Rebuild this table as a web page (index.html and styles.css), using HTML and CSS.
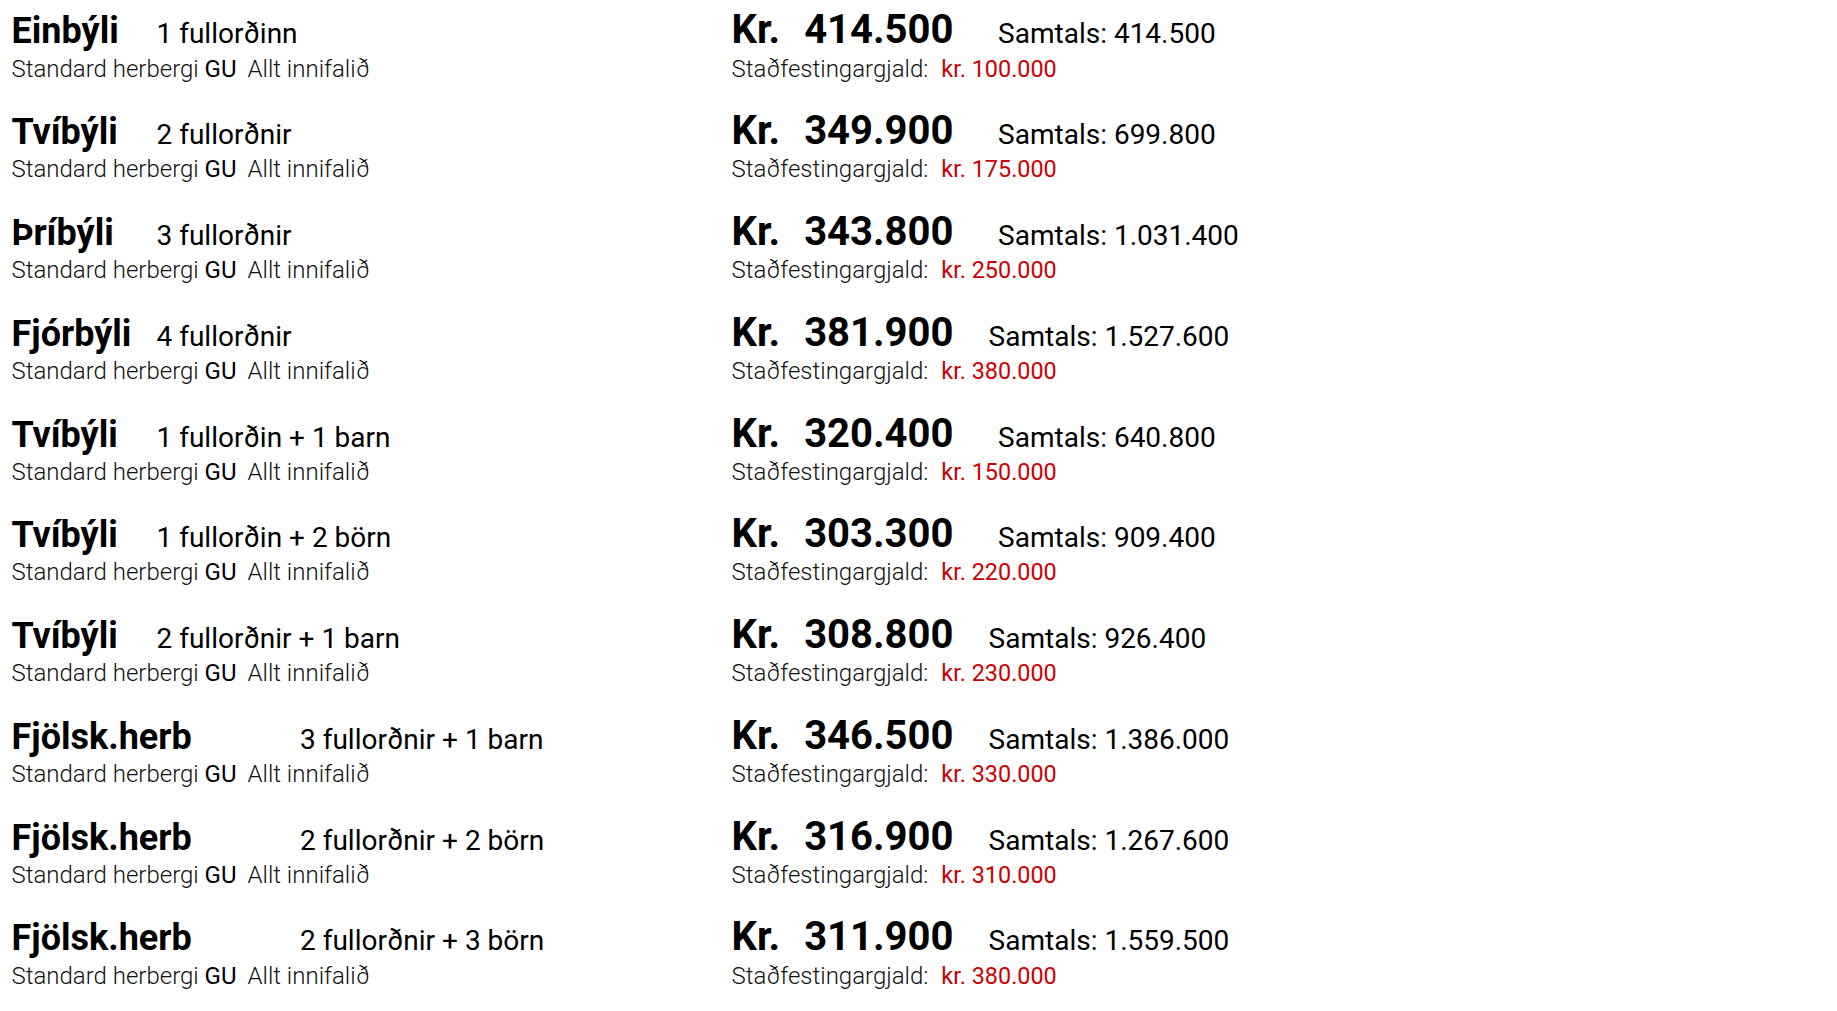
FILE: index.html
```html
<!DOCTYPE html>
<html lang="is">
<head>
<meta charset="utf-8">
<title>Verðskrá</title>
<link rel="stylesheet" href="styles.css">
</head>
<body>
<div class="list">
  <div class="row">
    <div class="cell left"><span class="title">Einbýli</span><span class="pax">1 fullorðinn</span></div>
    <div class="cell right"><span class="cur">Kr.</span><span class="amt">414.500</span><span class="total">Samtals: 414.500</span></div>
    <div class="cell sub">Standard herbergi <span class="gu">GU</span><span class="incl">Allt innifalið</span></div>
    <div class="cell sub2">Staðfestingargjald:<span class="fee">kr. 100.000</span></div>
  </div>
  <div class="row">
    <div class="cell left"><span class="title">Tvíbýli</span><span class="pax">2 fullorðnir</span></div>
    <div class="cell right"><span class="cur">Kr.</span><span class="amt">349.900</span><span class="total">Samtals: 699.800</span></div>
    <div class="cell sub">Standard herbergi <span class="gu">GU</span><span class="incl">Allt innifalið</span></div>
    <div class="cell sub2">Staðfestingargjald:<span class="fee">kr. 175.000</span></div>
  </div>
  <div class="row">
    <div class="cell left"><span class="title">Þríbýli</span><span class="pax">3 fullorðnir</span></div>
    <div class="cell right"><span class="cur">Kr.</span><span class="amt">343.800</span><span class="total">Samtals: 1.031.400</span></div>
    <div class="cell sub">Standard herbergi <span class="gu">GU</span><span class="incl">Allt innifalið</span></div>
    <div class="cell sub2">Staðfestingargjald:<span class="fee">kr. 250.000</span></div>
  </div>
  <div class="row">
    <div class="cell left"><span class="title">Fjórbýli</span><span class="pax">4 fullorðnir</span></div>
    <div class="cell right"><span class="cur">Kr.</span><span class="amt">381.900</span><span class="total tight">Samtals: 1.527.600</span></div>
    <div class="cell sub">Standard herbergi <span class="gu">GU</span><span class="incl">Allt innifalið</span></div>
    <div class="cell sub2">Staðfestingargjald:<span class="fee">kr. 380.000</span></div>
  </div>
  <div class="row">
    <div class="cell left"><span class="title">Tvíbýli</span><span class="pax">1 fullorðin + 1 barn</span></div>
    <div class="cell right"><span class="cur">Kr.</span><span class="amt">320.400</span><span class="total">Samtals: 640.800</span></div>
    <div class="cell sub">Standard herbergi <span class="gu">GU</span><span class="incl">Allt innifalið</span></div>
    <div class="cell sub2">Staðfestingargjald:<span class="fee">kr. 150.000</span></div>
  </div>
  <div class="row">
    <div class="cell left"><span class="title">Tvíbýli</span><span class="pax">1 fullorðin + 2 börn</span></div>
    <div class="cell right"><span class="cur">Kr.</span><span class="amt">303.300</span><span class="total">Samtals: 909.400</span></div>
    <div class="cell sub">Standard herbergi <span class="gu">GU</span><span class="incl">Allt innifalið</span></div>
    <div class="cell sub2">Staðfestingargjald:<span class="fee">kr. 220.000</span></div>
  </div>
  <div class="row">
    <div class="cell left"><span class="title">Tvíbýli</span><span class="pax">2 fullorðnir + 1 barn</span></div>
    <div class="cell right"><span class="cur">Kr.</span><span class="amt">308.800</span><span class="total tight">Samtals: 926.400</span></div>
    <div class="cell sub">Standard herbergi <span class="gu">GU</span><span class="incl">Allt innifalið</span></div>
    <div class="cell sub2">Staðfestingargjald:<span class="fee">kr. 230.000</span></div>
  </div>
  <div class="row">
    <div class="cell left"><span class="title wide">Fjölsk.herb</span><span class="pax">3 fullorðnir + 1 barn</span></div>
    <div class="cell right"><span class="cur">Kr.</span><span class="amt">346.500</span><span class="total tight">Samtals: 1.386.000</span></div>
    <div class="cell sub">Standard herbergi <span class="gu">GU</span><span class="incl">Allt innifalið</span></div>
    <div class="cell sub2">Staðfestingargjald:<span class="fee">kr. 330.000</span></div>
  </div>
  <div class="row">
    <div class="cell left"><span class="title wide">Fjölsk.herb</span><span class="pax">2 fullorðnir + 2 börn</span></div>
    <div class="cell right"><span class="cur">Kr.</span><span class="amt">316.900</span><span class="total tight">Samtals: 1.267.600</span></div>
    <div class="cell sub">Standard herbergi <span class="gu">GU</span><span class="incl">Allt innifalið</span></div>
    <div class="cell sub2">Staðfestingargjald:<span class="fee">kr. 310.000</span></div>
  </div>
  <div class="row">
    <div class="cell left"><span class="title wide">Fjölsk.herb</span><span class="pax">2 fullorðnir + 3 börn</span></div>
    <div class="cell right"><span class="cur">Kr.</span><span class="amt">311.900</span><span class="total tight">Samtals: 1.559.500</span></div>
    <div class="cell sub">Standard herbergi <span class="gu">GU</span><span class="incl">Allt innifalið</span></div>
    <div class="cell sub2">Staðfestingargjald:<span class="fee">kr. 380.000</span></div>
  </div>
</div>
</body>
</html>
```
FILE: styles.css
```css
html, body {
  margin: 0;
  padding: 0;
  background: #ffffff;
}

body {
  font-family: Roboto, "Noto Sans", sans-serif;
  color: #000000;
}

.list {
  display: flex;
  flex-direction: column;
  gap: 24.6px;
  padding: 6.4px 0 0 11.5px;
}

.row {
  display: grid;
  grid-template-columns: 720px auto;
  grid-template-rows: auto auto;
  align-items: baseline;
  row-gap: 1.2px;
}

.cell {
  font-size: 24px;
  white-space: nowrap;
}

.left,
.right {
  display: flex;
  align-items: baseline;
}

.title {
  display: inline-block;
  width: 145px;
  font-size: 36px;
  font-weight: 700;
}

.title.wide {
  width: 288.5px;
}

.pax {
  font-size: 28px;
  font-weight: 400;
}

.cur,
.amt {
  font-size: 40px;
  font-weight: 700;
}

.amt {
  margin-left: 24px;
}

.total {
  margin-left: 44.7px;
  font-size: 28px;
  font-weight: 400;
}

.total.tight {
  margin-left: 35.2px;
}

.sub,
.sub2 {
  font-weight: 300;
  color: #111111;
}

.gu {
  font-weight: 400;
  color: #000000;
}

.incl {
  margin-left: 11px;
}

.fee {
  margin-left: 13px;
  font-size: 23.4px;
  font-weight: 400;
  color: #cc0000;
}
```
